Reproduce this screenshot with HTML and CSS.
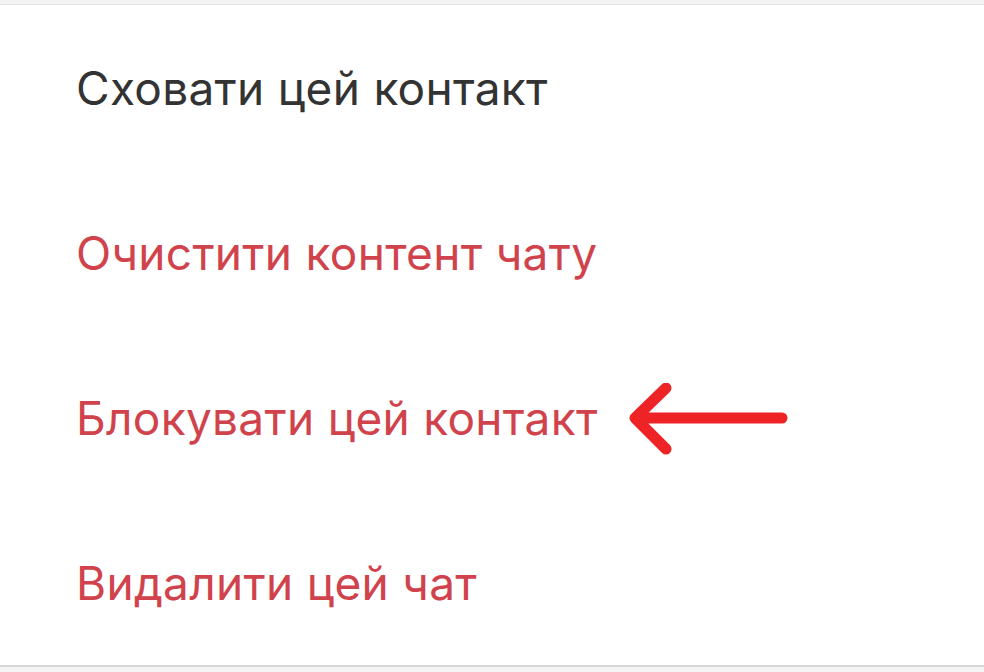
FILE: index.html
```html
<!DOCTYPE html>
<html lang="uk">
  <head>
    <meta charset="UTF-8" />
    <meta name="viewport" content="width=device-width, initial-scale=1.0" />
    <title>Дії з чатом</title>
    <link rel="stylesheet" href="styles.css">
  </head>
  <body>
    <div class="top-band"></div>

    <!-- Chat actions -->
    <ul class="action-list">
      <li class="action-item">Сховати цей контакт</li>
      <li class="action-item danger">Очистити контент чату</li>
      <li class="action-item danger">
        Блокувати цей контакт
        <svg class="pointer" width="160" height="74" viewBox="0 0 160 74">
          <path d="M154 35 H8 M38 5 L7 35 L38 66" fill="none" stroke="#ee2326" stroke-width="11" stroke-linecap="round" stroke-linejoin="round" />
        </svg>
      </li>
      <li class="action-item danger">Видалити цей чат</li>
    </ul>

    <div class="bottom-band"></div>
  </body>
</html>
```

FILE: styles.css
```css
body {
  margin: 0;
  padding: 0;
  background-color: #fff;
  font-family: "Inter", "Roboto", sans-serif;
  height: 672px;
  overflow: hidden;
}

.top-band {
  height: 4px;
  background-color: #f4f4f4;
  border-bottom: 1px solid #e6e6e6;
}

.action-list {
  list-style: none;
  margin: 0;
  padding: 0;
  background-color: #fff;
}

.action-item {
  height: 165px;
  display: flex;
  align-items: center;
  padding-left: 76px;
  font-size: 46px;
  color: #333;
  letter-spacing: 0.3px;
}

.action-item.danger {
  color: #d1434c;
}

.pointer {
  margin-left: 30px;
  margin-top: 4px;
}

.bottom-band {
  height: 10px;
  border-top: 2px solid #d6d6d6;
  background-color: #f4f4f4;
}
```
